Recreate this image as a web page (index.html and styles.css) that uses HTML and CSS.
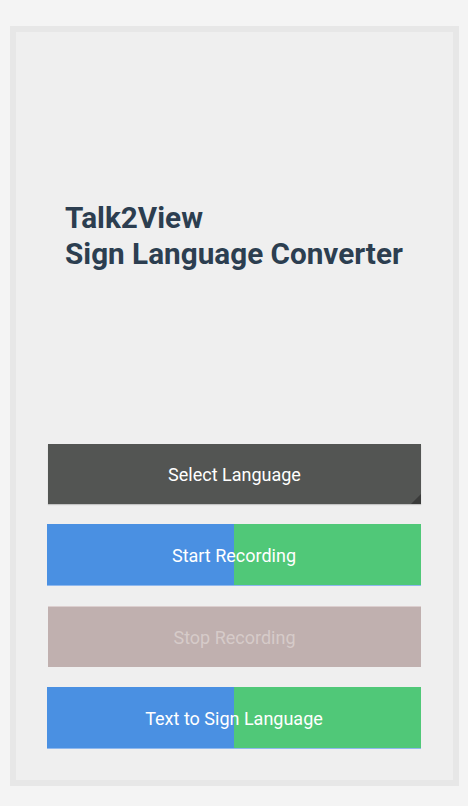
FILE: index.html
```html
<!DOCTYPE html>
<html lang="en">
<head>
<meta charset="utf-8">
<title>Talk2View</title>
<link rel="stylesheet" href="styles.css">
</head>
<body>
<div class="frame">
  <div class="hero">
    <h1 class="title">Talk2View<br>Sign Language Converter</h1>
  </div>
  <div class="actions">
    <button class="btn btn-select">Select Language<span class="corner"></span></button>
    <button class="btn btn-split">Start Recording</button>
    <button class="btn btn-disabled" disabled>Stop Recording</button>
    <button class="btn btn-split">Text to Sign Language</button>
  </div>
</div>
</body>
</html>
```
FILE: styles.css
```css
html, body {
  margin: 0;
  padding: 0;
}
body {
  background: #f4f4f4;
  font-family: Roboto, "Liberation Sans", sans-serif;
  padding: 26px 9px 20px 10px;
}
.frame {
  box-sizing: border-box;
  width: 449px;
  height: 760px;
  border: 6px solid #e7e7e7;
  background: #efefef;
  display: flex;
  flex-direction: column;
}
.hero {
  height: 412px;
  padding: 168px 0 0 49px;
  box-sizing: border-box;
}
.title {
  margin: 0;
  font-size: 29.7px;
  line-height: 36px;
  font-weight: 700;
  color: #2c3e50;
}
.actions {
  display: flex;
  flex-direction: column;
  gap: 20px;
  padding: 0 32px 0 31px;
}
.btn {
  position: relative;
  display: flex;
  align-items: center;
  justify-content: center;
  border: none;
  margin: 0;
  padding: 0;
  font-family: Roboto, "Liberation Sans", sans-serif;
  font-size: 18px;
  color: #ffffff;
  height: 62px;
  width: 374px;
}
.btn-select {
  height: 60px;
  width: 373px;
  margin-left: 1px;
  background: #535553;
  box-shadow: 0 1px 1px rgba(0,0,0,0.18);
}
.corner {
  position: absolute;
  right: 0;
  bottom: 0;
  width: 0;
  height: 0;
  border-style: solid;
  border-width: 0 0 10px 10px;
  border-color: transparent transparent #3a3b3a transparent;
}
.btn-split {
  background: linear-gradient(to right, #4a90e2 0, #4a90e2 50%, #50c878 50%, #50c878 100%);
  border-bottom: 1px solid #8fb8ee;
  padding-top: 2px;
}
.btn-disabled {
  height: 61px;
  width: 373px;
  margin-left: 1px;
  background: #c0b0af;
  color: #d6cbc9;
  border-top: 1px solid #dccfcf;
}
```
